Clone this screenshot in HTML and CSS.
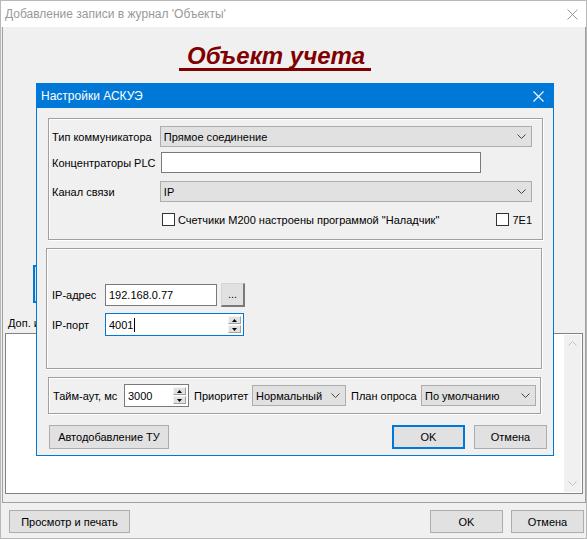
FILE: index.html
```html
<!DOCTYPE html>
<html lang="ru">
<head>
<meta charset="utf-8">
<title>Настройки АСКУЭ</title>
<link rel="stylesheet" href="styles.css">
</head>
<body>
<div class="window">
  <div class="titlebar">
    <span class="title">Добавление записи в журнал 'Объекты'</span>
    <svg class="close" width="11" height="11" viewBox="0 0 11 11"><path d="M0.5 0.5L10.5 10.5M10.5 0.5L0.5 10.5" stroke="#999" stroke-width="1" fill="none"/></svg>
  </div>
  <div class="panel">
    <div class="heading"><span class="heading-text">Объект учета</span></div>
    <div class="behind-btn"></div>
    <div class="dop-label">Доп. и</div>
    <div class="memo">
      <div class="vscroll">
        <div class="sb-arrow"><svg width="9" height="5" viewBox="0 0 9 5"><path d="M0.5 4.5L4.5 0.5L8.5 4.5" stroke="#c2c2c2" fill="none"/></svg></div>
        <div class="sb-arrow"><svg width="9" height="5" viewBox="0 0 9 5"><path d="M0.5 0.5L4.5 4.5L8.5 0.5" stroke="#c2c2c2" fill="none"/></svg></div>
      </div>
    </div>
  </div>
  <div class="footer">
    <div class="btn btn-print">Просмотр и печать</div>
    <div class="footer-right">
      <div class="btn btn-w73">OK</div>
      <div class="btn btn-w73">Отмена</div>
    </div>
  </div>

  <div class="dialog">
    <div class="dlg-title">
      <span>Настройки АСКУЭ</span>
      <svg class="dlg-close" width="11" height="11" viewBox="0 0 11 11"><path d="M0.5 0.5L10.5 10.5M10.5 0.5L0.5 10.5" stroke="#fff" stroke-width="1.1" fill="none"/></svg>
    </div>
    <div class="dlg-body">
      <div class="group group1">
        <div class="row r1">
          <span class="lbl lbl-w109">Тип коммуникатора</span>
          <div class="combo combo-w376"><span>Прямое соединение</span><svg class="chev" width="9" height="5" viewBox="0 0 9 5"><path d="M0.5 0.5L4.5 4.5L8.5 0.5" stroke="#444" fill="none"/></svg></div>
        </div>
        <div class="row r2">
          <span class="lbl lbl-w109">Концентраторы PLC</span>
          <div class="edit edit-w320"></div>
        </div>
        <div class="row r3">
          <span class="lbl lbl-w109">Канал связи</span>
          <div class="combo combo-w376"><span>IP</span><svg class="chev" width="9" height="5" viewBox="0 0 9 5"><path d="M0.5 0.5L4.5 4.5L8.5 0.5" stroke="#444" fill="none"/></svg></div>
        </div>
        <div class="row r4">
          <span class="check check-first"></span>
          <span class="check-lbl">Счетчики М200 настроены программой "Наладчик"</span>
          <span class="check check-7e1"></span>
          <span class="check-lbl">7E1</span>
        </div>
      </div>

      <div class="group group2">
        <div class="row ip1">
          <span class="lbl lbl-w53">IP-адрес</span>
          <div class="edit edit-ip">192.168.0.77</div>
          <div class="dots-btn">...</div>
        </div>
        <div class="row ip2">
          <span class="lbl lbl-w53">IP-порт</span>
          <div class="edit spin spin-port focused"><span>4001</span><span class="caret"></span>
            <div class="spin-btns">
              <div class="spin-b"><svg width="5" height="3" viewBox="0 0 5 3"><path d="M0 3L2.5 0L5 3Z" fill="#000"/></svg></div>
              <div class="spin-b"><svg width="5" height="3" viewBox="0 0 5 3"><path d="M0 0L2.5 3L5 0Z" fill="#000"/></svg></div>
            </div>
          </div>
        </div>
      </div>

      <div class="group group3">
        <span class="lbl g3-l1">Тайм-аут, мс</span>
        <div class="edit spin spin-timeout"><span>3000</span>
          <div class="spin-btns">
            <div class="spin-b"><svg width="5" height="3" viewBox="0 0 5 3"><path d="M0 3L2.5 0L5 3Z" fill="#000"/></svg></div>
            <div class="spin-b"><svg width="5" height="3" viewBox="0 0 5 3"><path d="M0 0L2.5 3L5 0Z" fill="#000"/></svg></div>
          </div>
        </div>
        <span class="lbl g3-l2">Приоритет</span>
        <div class="combo combo-prio"><span>Нормальный</span><svg class="chev" width="9" height="5" viewBox="0 0 9 5"><path d="M0.5 0.5L4.5 4.5L8.5 0.5" stroke="#444" fill="none"/></svg></div>
        <span class="lbl g3-l3">План опроса</span>
        <div class="combo combo-plan"><span>По умолчанию</span><svg class="chev" width="9" height="5" viewBox="0 0 9 5"><path d="M0.5 0.5L4.5 4.5L8.5 0.5" stroke="#444" fill="none"/></svg></div>
      </div>

      <div class="dlg-buttons">
        <div class="btn btn-auto">Автодобавление ТУ</div>
        <div class="btn btn-w73 btn-default">OK</div>
        <div class="btn btn-w73 btn-cancel">Отмена</div>
      </div>
    </div>
  </div>
</div>
</body>
</html>
```
FILE: styles.css
```css
* { box-sizing: border-box; }
html, body { margin: 0; padding: 0; background: #ffffff; }
body {
  font-family: "Liberation Sans", Arial, sans-serif;
  font-size: 11px;
  color: #000;
}
.window {
  position: relative;
  width: 587px;
  height: 539px;
  border: 1px solid #b8b8b8;
  background: #f0f0f0;
}
.titlebar {
  height: 26px;
  background: #fff;
  display: flex;
  align-items: center;
  padding-left: 4px;
}
.title {
  font-size: 12px;
  color: #999;
}
.close {
  margin-left: auto;
  margin-right: 8px;
}
.panel {
  margin-left: 1px;
  width: 584px;
  height: 476px;
  border: 1px solid #a0a0a0;
  border-top: none;
  display: flex;
  flex-direction: column;
}
.heading {
  display: flex;
  margin-top: 17px;
  padding-left: 176px;
}
.heading-text {
  font-size: 24px;
  font-weight: bold;
  font-style: italic;
  color: #800000;
  line-height: 24px;
  padding: 0 6px 0 8px;
  border-bottom: 3px solid #800000;
}
.behind-btn {
  margin-top: 194px;
  margin-left: 30px;
  width: 120px;
  height: 38px;
  border: 2px solid #0078d7;
  background: #e1e1e1;
}
.dop-label {
  margin-top: 14px;
  padding-left: 5px;
  height: 13px;
  line-height: 13px;
  white-space: nowrap;
}
.memo {
  margin-top: 3px;
  margin-left: 2px;
  width: 578px;
  height: 161px;
  border: 1px solid #828282;
  background: #fff;
  display: flex;
  justify-content: flex-end;
  padding: 1px 1px 0 0;
}
.vscroll {
  width: 17px;
  height: 157px;
  background: #f0f0f0;
  display: flex;
  flex-direction: column;
  justify-content: space-between;
}
.sb-arrow {
  height: 17px;
  display: flex;
  align-items: center;
  justify-content: center;
}
.footer {
  height: 35px;
  display: flex;
  align-items: flex-start;
  padding: 7px 2px 0 8px;
}
.footer-right {
  margin-left: auto;
  display: flex;
  gap: 8px;
}
.btn {
  height: 23px;
  background: #e1e1e1;
  border: 1px solid #adadad;
  display: flex;
  align-items: center;
  justify-content: center;
  white-space: nowrap;
}
.btn-print { width: 121px; }
.btn-w73 { width: 73px; }

/* dialog */
.dialog {
  position: absolute;
  left: 35px;
  top: 82px;
  width: 518px;
  border: 1px solid #0078d7;
  background: #f0f0f0;
}
.dlg-title {
  height: 24px;
  background: #0078d7;
  color: #fff;
  font-size: 12px;
  display: flex;
  align-items: center;
  padding-left: 4px;
}
.dlg-close {
  margin-left: auto;
  margin-right: 9px;
}
.dlg-body {
  padding: 10px 0 6px 0;
}
.group {
  border: 1px solid #a0a0a0;
  box-shadow: inset 1px 1px 0 #fff, 1px 1px 0 #fff;
}
.group1 {
  margin-left: 11px;
  width: 495px;
  height: 122px;
  padding: 7px 10px 0 3px;
}
.group2 {
  margin-left: 9px;
  margin-top: 8px;
  width: 496px;
  height: 121px;
  padding: 34px 0 0 5px;
}
.group3 {
  margin-left: 11px;
  margin-top: 8px;
  width: 493px;
  height: 37px;
  padding-left: 4px;
  display: flex;
  align-items: center;
}
.row {
  display: flex;
  align-items: center;
}
.r1, .r2, .r3 { height: 21px; }
.r2 { margin-top: 5px; }
.r3 { margin-top: 8px; }
.r4 { margin-top: 11px; height: 13px; }
.lbl { white-space: nowrap; }
.lbl-w109 { width: 109px; }
.lbl-w53 { width: 53px; }
.combo {
  height: 21px;
  background: #e1e1e1;
  border: 1px solid #adadad;
  display: flex;
  align-items: center;
  padding: 0 5px 0 3px;
  white-space: nowrap;
}
.chev { margin-left: auto; flex: none; }
.combo-w376 { width: 376px; }
.edit {
  height: 21px;
  background: #fff;
  border: 1px solid #7a7a7a;
  display: flex;
  align-items: center;
  padding-left: 3px;
}
.edit-w320 { width: 320px; }
.check {
  width: 13px;
  height: 13px;
  background: #fff;
  border: 1px solid #333;
  flex: none;
}
.check-first { margin-left: 110px; }
.check-lbl { margin-left: 3px; white-space: nowrap; }
.check-7e1 { margin-left: auto; }

.ip1 { height: 24px; }
.ip2 { height: 23px; margin-top: 6px; }
.edit-ip { width: 112px; height: 22px; }
.dots-btn {
  margin-left: 4px;
  width: 24px;
  height: 24px;
  background: #e1e1e1;
  border-style: solid;
  border-width: 1px 2px 2px 1px;
  border-color: #d4d4d4 #7a7a7a #7a7a7a #d4d4d4;
  display: flex;
  align-items: flex-end;
  justify-content: center;
  padding-bottom: 5px;
  line-height: 11px;
}
.spin { height: 23px; }
.spin-port { width: 139px; }
.focused { border-color: #0078d7; }
.caret {
  display: inline-block;
  width: 1px;
  height: 14px;
  background: #000;
  margin-left: 1px;
}
.spin-btns {
  margin-left: auto;
  margin-right: 2px;
  display: flex;
  flex-direction: column;
  gap: 1px;
}
.spin-b {
  width: 13px;
  height: 8px;
  background: #e1e1e1;
  border: 1px solid;
  border-color: #f4f4f4 #a0a0a0 #a0a0a0 #f4f4f4;
  display: flex;
  align-items: center;
  justify-content: center;
}
.g3-l1 { width: 71px; }
.spin-timeout { width: 65px; }
.g3-l2 { width: 58px; margin-left: 5px; }
.combo-prio { width: 94px; }
.g3-l3 { width: 70px; margin-left: 5px; }
.combo-plan { width: 115px; }

.dlg-buttons {
  margin-top: 11px;
  display: flex;
  padding-left: 12px;
}
.btn-auto { width: 120px; height: 24px; }
.btn-default {
  margin-left: 223px;
  height: 24px;
  border: 2px solid #0078d7;
}
.btn-cancel { margin-left: 9px; height: 24px; }
```
